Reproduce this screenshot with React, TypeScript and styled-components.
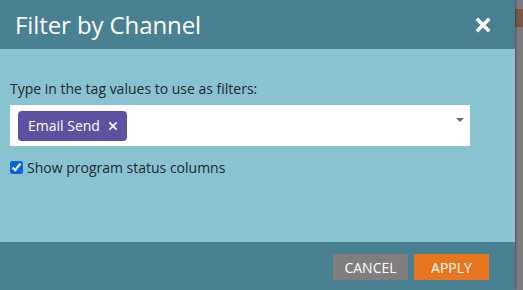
import React from 'react';
import styled, { createGlobalStyle } from 'styled-components';

const GlobalStyle = createGlobalStyle`
  html, body {
    margin: 0;
    padding: 0;
    background: #7c7b80;
  }
  * {
    box-sizing: border-box;
  }
`;

const Page = styled.div`
  display: flex;
  width: 523px;
  height: 290px;
  overflow: hidden;
  font-family: 'Open Sans', 'Noto Sans', sans-serif;
`;

const Dialog = styled.div`
  width: 515px;
  height: 290px;
  display: flex;
  flex-direction: column;
  background: #89c2d1;
  box-shadow: 1px 0 2px rgba(0, 0, 0, 0.35);
  position: relative;
  z-index: 1;
`;

const Header = styled.div`
  height: 49px;
  flex: none;
  background: #4a8192;
  display: flex;
  align-items: center;
  justify-content: space-between;
  padding: 0 24px 0 15px;
`;

const Title = styled.h1`
  margin: 0;
  font-size: 24px;
  font-weight: 400;
  color: #ffffff;
  letter-spacing: -0.1px;
`;

const CloseButton = styled.button`
  border: 0;
  background: none;
  padding: 0;
  width: 16px;
  height: 16px;
  display: flex;
  align-items: center;
  justify-content: center;
  cursor: pointer;
`;

const Body = styled.div`
  flex: 1;
  padding: 30px 10px 0 10px;
  display: flex;
  flex-direction: column;
`;

const Label = styled.div`
  font-size: 14px;
  color: #1d2a30;
  line-height: 19px;
  margin-bottom: 7px;
`;

const TagInput = styled.div`
  width: 460px;
  height: 41px;
  background: #ffffff;
  display: flex;
  align-items: center;
  padding: 0 8px;
  position: relative;
`;

const Tag = styled.span`
  display: inline-flex;
  align-items: center;
  gap: 8px;
  height: 30px;
  padding: 0 9px 0 10px;
  border-radius: 4px;
  background: #5e51a1;
  color: #ffffff;
  font-size: 14px;
`;

const Caret = styled.span`
  position: absolute;
  right: 6px;
  top: 13px;
  width: 0;
  height: 0;
  border-left: 4px solid transparent;
  border-right: 4px solid transparent;
  border-top: 4px solid #6b6b6b;
`;

const CheckRow = styled.label`
  display: flex;
  align-items: center;
  gap: 4px;
  margin-top: 12px;
  font-size: 14px;
  color: #1d2a30;
  line-height: 19px;
`;

const CheckBox = styled.input`
  margin: 0;
  width: 13px;
  height: 13px;
  accent-color: #0a66d8;
`;

const Footer = styled.div`
  height: 48px;
  flex: none;
  background: #4a8192;
  display: flex;
  align-items: flex-start;
  justify-content: flex-end;
  gap: 6px;
  padding: 12px 26px 0 0;
`;

const Button = styled.button<{ $variant: 'cancel' | 'apply' }>`
  width: 75px;
  height: 26px;
  border: 0;
  padding: 0;
  font-family: inherit;
  font-size: 14px;
  text-transform: uppercase;
  color: #ffffff;
  background: ${p => (p.$variant === 'apply' ? '#e8761f' : '#807e7f')};
  cursor: pointer;
`;

const Backdrop = styled.div`
  flex: 1;
  background: #7c7b80;
  padding-top: 9px;
`;

const BackdropBlock = styled.div`
  height: 18px;
  background: #7a5846;
`;

const Cross = ({ size, stroke }: { size: number; stroke: number }) => (
  <svg width={size} height={size} viewBox="0 0 16 16">
    <path d="M3 3 L13 13 M13 3 L3 13" stroke="#fff" strokeWidth={stroke} strokeLinecap="square" />
  </svg>
);

const App: React.FC = () => {
  return (
    <>
      <GlobalStyle />
      <Page>
        <Dialog>
          <Header>
            <Title>Filter by Channel</Title>
            <CloseButton aria-label="Close">
              <Cross size={16} stroke={3.4} />
            </CloseButton>
          </Header>
          <Body>
            <Label>Type in the tag values to use as filters:</Label>
            <TagInput>
              <Tag>
                Email Send
                <Cross size={10} stroke={2.6} />
              </Tag>
              <Caret />
            </TagInput>
            <CheckRow>
              <CheckBox type="checkbox" defaultChecked />
              Show program status columns
            </CheckRow>
          </Body>
          <Footer>
            <Button $variant="cancel">Cancel</Button>
            <Button $variant="apply">Apply</Button>
          </Footer>
        </Dialog>
        <Backdrop>
          <BackdropBlock />
        </Backdrop>
      </Page>
    </>
  );
};

export default App;
